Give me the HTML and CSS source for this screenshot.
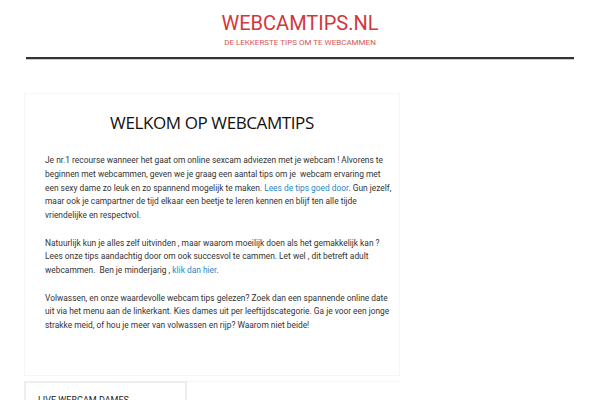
FILE: index.html
```
<!DOCTYPE html>
<html lang="nl">
<head>
<meta charset="utf-8">
<title>Webcamtips.nl</title>
<link rel="stylesheet" href="styles.css">
</head>
<body>
<header class="site-header">
  <div class="brand">
    <h1 class="site-title">WEBCAMTIPS.NL</h1>
    <p class="tagline">DE LEKKERSTE TIPS OM TE WEBCAMMEN</p>
  </div>
  <hr class="rule">
</header>
<main class="layout">
  <article class="content-box">
    <h2 class="page-title">WELKOM OP WEBCAMTIPS</h2>
    <p>Je nr.1 recourse wanneer het gaat om online sexcam adviezen met je webcam ! Alvorens te<br>
    beginnen met webcammen, geven we je graag een aantal tips om je&nbsp; webcam ervaring met<br>
    een sexy dame zo leuk en zo spannend mogelijk te maken. <a href="#">Lees de tips goed door</a>. Gun jezelf,<br>
    maar ook je campartner de tijd elkaar een beetje te leren kennen en blijf ten alle tijde<br>
    vriendelijke en respectvol.</p>
    <p>Natuurlijk kun je alles zelf uitvinden , maar waarom moeilijk doen als het gemakkelijk kan ?<br>
    Lees onze tips aandachtig door om ook succesvol te cammen. Let wel , dit betreft adult<br>
    webcammen.&nbsp; Ben je minderjarig , <a href="#">klik dan hier</a>.</p>
    <p>Volwassen, en onze waardevolle webcam tips gelezen? Zoek dan een spannende online date<br>
    uit via het menu aan de linkerkant. Kies dames uit per leeftijdscategorie. Ga je voor een jonge<br>
    strakke meid, of hou je meer van volwassen en rijp? Waarom niet beide!</p>
  </article>
  <div class="lower-row">
    <section class="widget">
      <h3 class="widget-title">LIVE WEBCAM DAMES</h3>
    </section>
    <section class="widget-empty"></section>
  </div>
</main>
</body>
</html>
```
FILE: styles.css
```
html, body {
  margin: 0;
  padding: 0;
  background: #fff;
}
body {
  font-family: "Roboto", "Liberation Sans", sans-serif;
  color: #333;
  overflow: hidden;
  height: 400px;
}
.site-header {
  padding: 11px 26px 0;
}
.brand {
  text-align: center;
}
.site-title {
  margin: 0;
  font-family: "Roboto", sans-serif;
  font-weight: 400;
  font-size: 20px;
  line-height: 24px;
  color: #d1383d;
}
.tagline {
  margin: 3px 0 0;
  font-family: "Roboto", sans-serif;
  font-size: 8px;
  line-height: 10px;
  color: #d9545a;
}
.rule {
  margin: 9px 0 0;
  border: 0;
  border-top: 2px solid #333;
  border-bottom: 1px solid #ccc;
  height: 0;
}
.layout {
  width: 376px;
  margin: 33px 0 0 24px;
}
.content-box {
  box-sizing: border-box;
  height: 283px;
  border: 1px solid #f6f6f6;
  padding: 18px 4px 0 20px;
}
.page-title {
  margin: 0 0 20px;
  padding-right: 16px;
  text-align: center;
  font-family: "Open Sans", sans-serif;
  font-weight: 400;
  font-size: 17px;
  letter-spacing: -0.4px;
  line-height: 22px;
  color: #111;
}
.content-box p {
  margin: 0 0 13.75px;
  font-family: "Roboto", sans-serif;
  font-size: 8.4px;
  line-height: 13.75px;
  color: #333;
  white-space: nowrap;
}
.content-box a {
  color: #1e88c8;
  text-decoration: none;
}
.lower-row {
  display: flex;
  margin-top: 5px;
}
.widget {
  width: 135px;
  border: 2px solid #eee;
  border-bottom: 0;
  padding: 12px 12px 0;
  height: 30px;
}
.widget-title {
  margin: 0;
  font-family: "Roboto", sans-serif;
  font-weight: 400;
  font-size: 9px;
  line-height: 11px;
  color: #222;
}
.widget-empty {
  flex: 1;
  border-top: 1px solid #f7f7f7;
}
```
